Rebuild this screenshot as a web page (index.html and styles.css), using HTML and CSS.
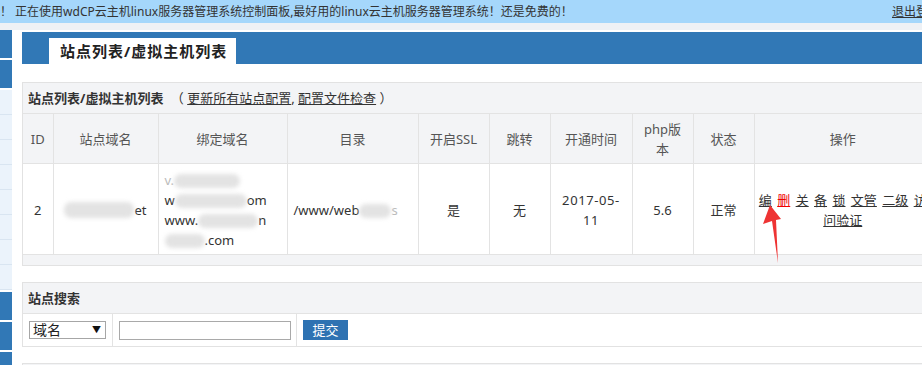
FILE: index.html
```html
<!DOCTYPE html>
<html lang="zh-CN">
<head>
    <meta charset="UTF-8">
    <meta name="viewport" content="width=device-width, initial-scale=1.0">
    <title>站点列表/虚拟主机列表</title>
    <link rel="stylesheet" href="styles.css">
</head>
<body>
    <div class="topbar">
        <span>！ 正在使用wdCP云主机linux服务器管理系统控制面板,最好用的linux云主机服务器管理系统！还是免费的！</span>
        <a class="logout" href="#">退出登录</a>
    </div>

    <div class="layout">
        <div class="sidebar">
            <div class="side-item"></div>
            <div class="side-item"></div>
            <div class="side-item light"></div>
            <div class="side-item light"></div>
            <div class="side-item light"></div>
            <div class="side-item light"></div>
            <div class="side-item light"></div>
            <div class="side-item light"></div>
            <div class="side-item light"></div>
            <div class="side-item light last"></div>
            <div class="side-item"></div>
            <div class="side-item"></div>
            <div class="side-item"></div>
        </div>

        <div class="main">
            <div class="tabbar">
                <div class="tab">站点列表/虚拟主机列表</div>
            </div>

            <div class="panel">
                <div class="panel-title">
                    <b>站点列表/虚拟主机列表</b>
                    <span class="links">（ <a href="#">更新所有站点配置</a>, <a href="#">配置文件检查</a> ）</span>
                </div>
                <table class="sites">
                    <colgroup>
                        <col style="width:30px">
                        <col style="width:105px">
                        <col style="width:129px">
                        <col style="width:131px">
                        <col style="width:71px">
                        <col style="width:61px">
                        <col style="width:82px">
                        <col style="width:61px">
                        <col style="width:61px">
                        <col>
                    </colgroup>
                    <thead>
                        <tr>
                            <th>ID</th>
                            <th>站点域名</th>
                            <th>绑定域名</th>
                            <th>目录</th>
                            <th>开启SSL</th>
                            <th>跳转</th>
                            <th>开通时间</th>
                            <th>php版本</th>
                            <th>状态</th>
                            <th>操作</th>
                        </tr>
                    </thead>
                    <tbody>
                        <tr>
                            <td>2</td>
                            <td><span class="blur b-site"></span>et</td>
                            <td class="left">
                                <span class="faint">v.</span><span class="blur b1"></span><br>
                                w<span class="blur b2"></span>om<br>
                                www.<span class="blur b3"></span>n<br>
                                <span class="blur b4"></span>.com
                            </td>
                            <td class="left">/www/web<span class="blur b5"></span><span class="faint">s</span></td>
                            <td>是</td>
                            <td>无</td>
                            <td class="date">2017-05-11</td>
                            <td>5.6</td>
                            <td>正常</td>
                            <td class="ops">
                                <a href="#">编</a> <a href="#" class="del">删</a> <a href="#">关</a> <a href="#">备</a> <a href="#">锁</a> <a href="#">文管</a> <a href="#">二级</a> <a href="#">访问验证</a>
                            </td>
                        </tr>
                    </tbody>
                </table>
                <div class="panel-foot"></div>
            </div>

            <div class="panel">
                <div class="panel-title"><b>站点搜索</b></div>
                <div class="search-row">
                    <div class="cell cell-select">
                        <div class="select-box">
                            <select>
                                <option>域名</option>
                                <option>目录</option>
                            </select>
                        </div>
                    </div>
                    <div class="cell cell-input">
                        <input type="text">
                    </div>
                    <div class="cell cell-btn">
                        <button>提交</button>
                    </div>
                </div>
            </div>

            <div class="panel panel-next"></div>
        </div>
    </div>

    <!-- 标注箭头 -->
    <svg class="arrow" width="30" height="66" viewBox="0 0 30 66">
        <polygon points="10,5 3,24 12,21 18,63 16,20 21,19" fill="#ee3333"/>
    </svg>
</body>
</html>
```

FILE: styles.css
```css
html, body {
    margin: 0;
    overflow: hidden;
}
body {
    font-family: "Noto Sans", "Noto Sans CJK SC", sans-serif;
    font-size: 13px;
    color: #333;
    background: #ffffff;
    width: 922px;
    height: 365px;
    position: relative;
}
a {
    color: #333;
    text-decoration: underline;
}
.topbar {
    width: 950px;
    height: 23px;
    line-height: 23px;
    background: #a5d7fb;
    border-bottom: 7px solid #eef1f5;
    font-size: 12px;
    display: flex;
    white-space: nowrap;
}
.logout {
    margin-left: auto;
    margin-right: 10px;
}
.layout {
    display: flex;
    align-items: flex-start;
}
.sidebar {
    width: 12px;
    flex: none;
}
.side-item {
    height: 28px;
    background: #3178b6;
    margin-bottom: 2px;
}
.side-item.light {
    height: 24px;
    margin-bottom: 0;
    background: #ebf3fb;
    border-bottom: 1px solid #d9e5f1;
}
.side-item.light.last {
    margin-bottom: 2px;
}
.main {
    width: 910px;
    flex: none;
    margin-left: 10px;
    padding-top: 2px;
}
.tabbar {
    height: 32px;
    background: #3178b6;
    padding-left: 27px;
    display: flex;
    align-items: flex-end;
}
.tab {
    width: 187px;
    height: 26px;
    line-height: 26px;
    box-sizing: border-box;
    padding-left: 11px;
    background: #fff;
    font-size: 15px;
    font-weight: bold;
    letter-spacing: 1px;
    color: #222;
}
.panel {
    margin-top: 18px;
    border: 1px solid #e2e2e2;
    background: #f3f4f6;
}
.panel + .panel {
    margin-top: 16px;
}
.panel-title {
    height: 30px;
    line-height: 30px;
    padding-left: 5px;
    white-space: nowrap;
}
.links {
    margin-left: 4px;
}
.sites {
    width: 100%;
    border-collapse: collapse;
    table-layout: fixed;
}
.sites th,
.sites td {
    border-top: 1px solid #e3e3e3;
    border-left: 1px solid #e3e3e3;
    padding: 5px 7px 4px;
    line-height: 20px;
    text-align: center;
    font-weight: normal;
}
.sites th:first-child,
.sites td:first-child {
    border-left: none;
}
.sites th {
    color: #555;
}
.sites td {
    background: #fff;
    color: #333;
    padding-top: 6px;
}
.sites td.left {
    text-align: left;
    padding-left: 6px;
}
.sites td.date {
    letter-spacing: 0.6px;
}
.sites td.ops {
    padding-left: 4px;
    padding-right: 4px;
    word-spacing: 2px;
}
.ops a {
    color: #333;
}
.ops a.del {
    color: #e00;
}
.blur {
    display: inline-block;
    vertical-align: -3px;
    height: 14px;
    background: #e3e3e3;
    border-radius: 7px;
    filter: blur(2px);
}
.b-site { width: 70px; height: 16px; }
.b1 { width: 66px; }
.b2 { width: 72px; }
.b3 { width: 60px; }
.b4 { width: 40px; }
.b5 { width: 32px; }
.faint {
    color: #bbb;
}
.panel-foot {
    height: 10px;
    border-top: 1px solid #e3e3e3;
}
.search-row {
    display: flex;
    height: 32px;
    background: #fff;
    border-top: 1px solid #e3e3e3;
}
.cell {
    display: flex;
    align-items: center;
    box-sizing: border-box;
    padding: 0 6px;
    border-right: 1px solid #e3e3e3;
}
.cell-select { width: 90px; }
.cell-input { width: 184px; }
.cell-btn { border-right: none; }
.select-box {
    position: relative;
    width: 77px;
    height: 18px;
}
.select-box::after {
    content: "▼";
    position: absolute;
    right: 5px;
    top: 3px;
    font-size: 9px;
    line-height: 12px;
    color: #111;
    pointer-events: none;
}
.select-box select {
    appearance: none;
    -webkit-appearance: none;
    width: 77px;
    height: 18px;
    margin: 0;
    padding: 0 3px;
    border: 1px solid #a6a6a6;
    background: #fff;
    font-family: inherit;
    font-size: 14px;
    line-height: 16px;
    color: #222;
}
.cell-input input {
    width: 172px;
    height: 19px;
    box-sizing: border-box;
    margin: 0;
    border: 1px solid #a9a9a9;
    padding: 0 3px;
}
.cell-btn button {
    width: 45px;
    height: 20px;
    padding: 0;
    border: none;
    background: #2e72b2;
    color: #fff;
    font-family: inherit;
    font-size: 13px;
    line-height: 20px;
    cursor: pointer;
}
.panel-next {
    height: 30px;
    background: #f3f4f6;
}
.arrow {
    position: absolute;
    left: 760px;
    top: 200px;
}
```
